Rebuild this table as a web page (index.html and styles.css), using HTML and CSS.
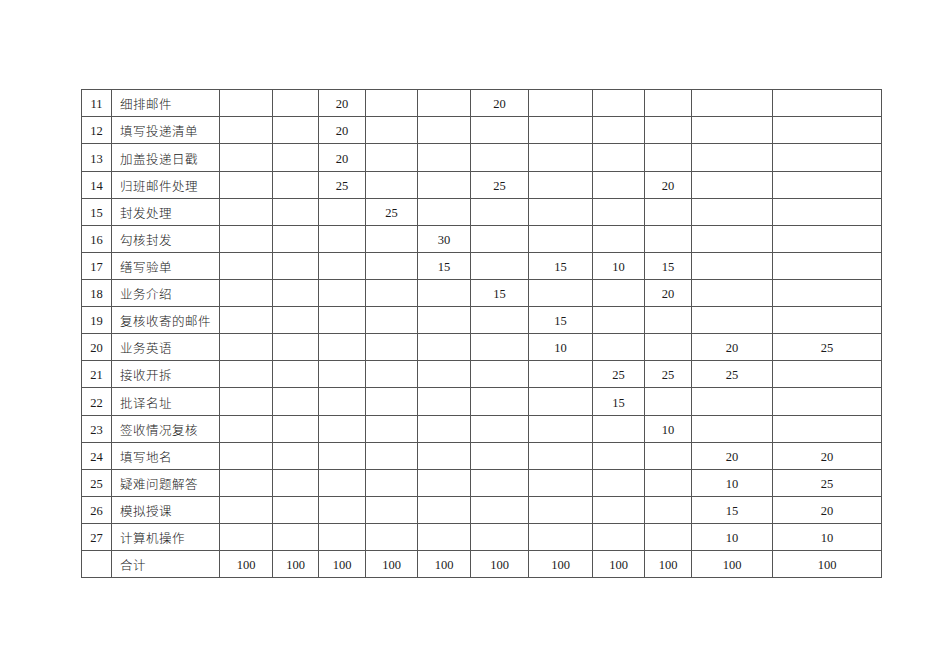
FILE: index.html
```html
<!DOCTYPE html>
<html lang="zh-CN">
<head>
<meta charset="utf-8">
<link rel="stylesheet" href="styles.css">
</head>
<body>
<div class="page">
<table class="grid">
<colgroup>
<col class="c-no"><col class="c-name"><col class="c1"><col class="c2"><col class="c3"><col class="c4"><col class="c5"><col class="c6"><col class="c7"><col class="c8"><col class="c9"><col class="c10"><col class="c11">
</colgroup>
<tbody>
<tr><td class="no">11</td><td class="name">细排邮件</td><td></td><td></td><td>20</td><td></td><td></td><td>20</td><td></td><td></td><td></td><td></td><td></td></tr>
<tr><td class="no">12</td><td class="name">填写投递清单</td><td></td><td></td><td>20</td><td></td><td></td><td></td><td></td><td></td><td></td><td></td><td></td></tr>
<tr><td class="no">13</td><td class="name">加盖投递日戳</td><td></td><td></td><td>20</td><td></td><td></td><td></td><td></td><td></td><td></td><td></td><td></td></tr>
<tr><td class="no">14</td><td class="name">归班邮件处理</td><td></td><td></td><td>25</td><td></td><td></td><td>25</td><td></td><td></td><td>20</td><td></td><td></td></tr>
<tr><td class="no">15</td><td class="name">封发处理</td><td></td><td></td><td></td><td>25</td><td></td><td></td><td></td><td></td><td></td><td></td><td></td></tr>
<tr><td class="no">16</td><td class="name">勾核封发</td><td></td><td></td><td></td><td></td><td>30</td><td></td><td></td><td></td><td></td><td></td><td></td></tr>
<tr><td class="no">17</td><td class="name">缮写验单</td><td></td><td></td><td></td><td></td><td>15</td><td></td><td>15</td><td>10</td><td>15</td><td></td><td></td></tr>
<tr><td class="no">18</td><td class="name">业务介绍</td><td></td><td></td><td></td><td></td><td></td><td>15</td><td></td><td></td><td>20</td><td></td><td></td></tr>
<tr><td class="no">19</td><td class="name">复核收寄的邮件</td><td></td><td></td><td></td><td></td><td></td><td></td><td>15</td><td></td><td></td><td></td><td></td></tr>
<tr><td class="no">20</td><td class="name">业务英语</td><td></td><td></td><td></td><td></td><td></td><td></td><td>10</td><td></td><td></td><td>20</td><td>25</td></tr>
<tr><td class="no">21</td><td class="name">接收开拆</td><td></td><td></td><td></td><td></td><td></td><td></td><td></td><td>25</td><td>25</td><td>25</td><td></td></tr>
<tr><td class="no">22</td><td class="name">批译名址</td><td></td><td></td><td></td><td></td><td></td><td></td><td></td><td>15</td><td></td><td></td><td></td></tr>
<tr><td class="no">23</td><td class="name">签收情况复核</td><td></td><td></td><td></td><td></td><td></td><td></td><td></td><td></td><td>10</td><td></td><td></td></tr>
<tr><td class="no">24</td><td class="name">填写地名</td><td></td><td></td><td></td><td></td><td></td><td></td><td></td><td></td><td></td><td>20</td><td>20</td></tr>
<tr><td class="no">25</td><td class="name">疑难问题解答</td><td></td><td></td><td></td><td></td><td></td><td></td><td></td><td></td><td></td><td>10</td><td>25</td></tr>
<tr><td class="no">26</td><td class="name">模拟授课</td><td></td><td></td><td></td><td></td><td></td><td></td><td></td><td></td><td></td><td>15</td><td>20</td></tr>
<tr><td class="no">27</td><td class="name">计算机操作</td><td></td><td></td><td></td><td></td><td></td><td></td><td></td><td></td><td></td><td>10</td><td>10</td></tr>
<tr><td class="no"></td><td class="name">合计</td><td>100</td><td>100</td><td>100</td><td>100</td><td>100</td><td>100</td><td>100</td><td>100</td><td>100</td><td>100</td><td>100</td></tr>
</tbody>
</table>
</div>
</body>
</html>
```

FILE: styles.css
```css
html, body {
  margin: 0;
  padding: 0;
  background: #ffffff;
}
.page {
  padding: 89px 0 0 81px;
}
.grid {
  border-collapse: collapse;
  table-layout: fixed;
  width: 801px;
  font-family: "Liberation Serif", "Noto Sans CJK SC", serif;
  font-size: 12.5px;
  color: #1a1a1a;
}
.grid tr {
  height: 27px;
}
.grid tr:nth-child(9n+3) {
  height: 28px;
}
.grid td {
  border: 1px solid #555;
  height: 24px;
  padding: 2px 0 0 0;
  box-sizing: border-box;
  text-align: center;
  vertical-align: middle;
  line-height: 14px;
  white-space: nowrap;
  overflow: hidden;
}
.grid td.name {
  text-align: left;
  padding-left: 8px;
  font-family: "Noto Sans CJK SC", sans-serif;
  font-size: 12.5px;
  font-weight: 300;
  letter-spacing: 0.5px;
}
.c-no { width: 30px; }
.c-name { width: 108px; }
.c1 { width: 53px; }
.c2 { width: 46px; }
.c3 { width: 47px; }
.c4 { width: 52px; }
.c5 { width: 53px; }
.c6 { width: 58px; }
.c7 { width: 64px; }
.c8 { width: 52px; }
.c9 { width: 47px; }
.c10 { width: 81px; }
.c11 { width: 109px; }
```
